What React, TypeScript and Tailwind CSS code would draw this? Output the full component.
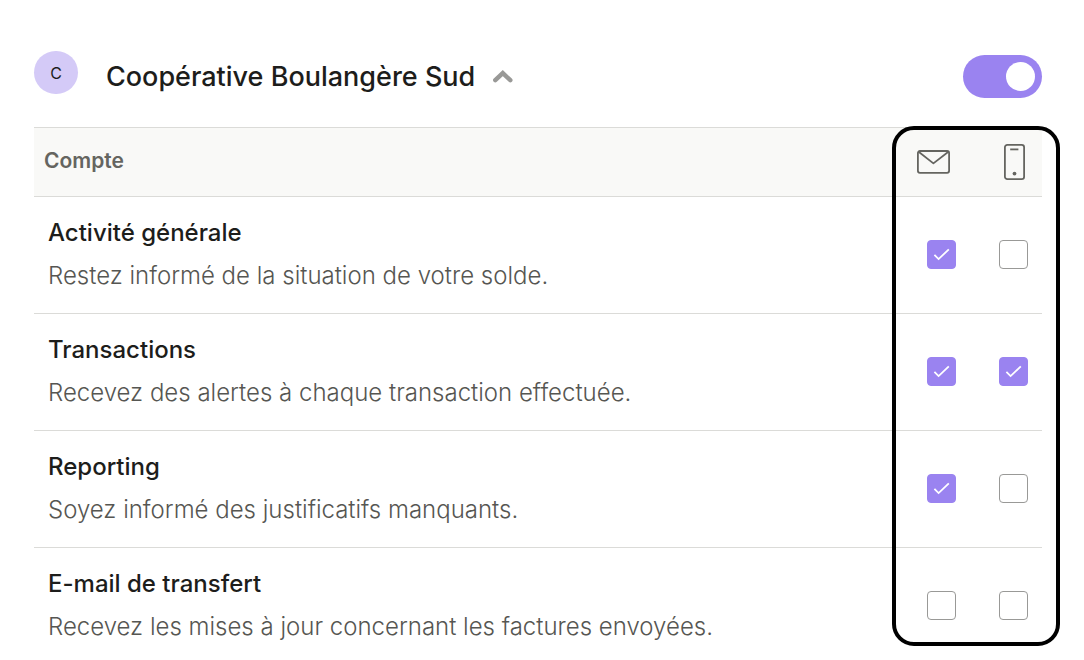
import { useState } from "react";

type Channel = "email" | "push";

interface NotificationSetting {
  id: string;
  title: string;
  description: string;
  email: boolean;
  push: boolean;
}

const INITIAL_SETTINGS: NotificationSetting[] = [
  {
    id: "activity",
    title: "Activité générale",
    description: "Restez informé de la situation de votre solde.",
    email: true,
    push: false,
  },
  {
    id: "transactions",
    title: "Transactions",
    description: "Recevez des alertes à chaque transaction effectuée.",
    email: true,
    push: true,
  },
  {
    id: "reporting",
    title: "Reporting",
    description: "Soyez informé des justificatifs manquants.",
    email: true,
    push: false,
  },
  {
    id: "transfer",
    title: "E-mail de transfert",
    description: "Recevez les mises à jour concernant les factures envoyées.",
    email: false,
    push: false,
  },
];

function ChevronUp() {
  return (
    <svg width="20" height="13" viewBox="0 0 20 13" fill="none" aria-hidden="true">
      <path d="M2.3 10.2 9.8 3.1l7.5 7.1" stroke="#999997" strokeWidth="4.4" strokeLinecap="round" />
    </svg>
  );
}

function MailIcon() {
  return (
    <svg className="block" width="33" height="24" viewBox="0 0 33 24" fill="none" stroke="#656560" strokeWidth="1.8" role="img" aria-label="E-mail">
      <rect x="0.9" y="1" width="31.2" height="21.8" rx="2" />
      <path d="M1.6 1.8 16.4 13.4 31.4 1.8" strokeLinejoin="round" />
    </svg>
  );
}

function PhoneIcon() {
  return (
    <svg className="block" width="21" height="36" viewBox="0 0 21 36" fill="none" stroke="#656560" strokeWidth="1.8" role="img" aria-label="Mobile">
      <rect x="0.9" y="0.9" width="19.2" height="34.2" rx="2.4" />
      <path d="M6.2 5.4h8.2" />
      <circle cx="10.5" cy="29.6" r="1.9" fill="#656560" stroke="none" />
    </svg>
  );
}

interface TickBoxProps {
  label: string;
  checked: boolean;
  onChange: () => void;
}

function TickBox({ label, checked, onChange }: TickBoxProps) {
  return (
    <label className="mx-auto grid size-[29px] cursor-pointer">
      <input
        type="checkbox"
        aria-label={label}
        checked={checked}
        onChange={onChange}
        className="peer col-start-1 row-start-1 size-[29px] cursor-pointer appearance-none rounded border border-[#999997] bg-white checked:border-[#9a83f0] checked:bg-[#9a83f0]"
      />
      <svg
        className="pointer-events-none invisible col-start-1 row-start-1 peer-checked:visible"
        width="29"
        height="29"
        viewBox="0 0 29 29"
        fill="none"
        stroke="#fff"
        strokeWidth="1.8"
        aria-hidden="true"
      >
        <path d="m7.4 14.9 4.2 4.2 10.2-9.8" />
      </svg>
    </label>
  );
}

export default function App() {
  const [enabled, setEnabled] = useState(true);
  const [open, setOpen] = useState(true);
  const [settings, setSettings] = useState(INITIAL_SETTINGS);

  const toggle = (id: string, channel: Channel) =>
    setSettings((rows) => rows.map((r) => (r.id === id ? { ...r, [channel]: !r[channel] } : r)));

  return (
    <main className="min-h-screen bg-white pt-[51px] pr-[42px] pb-4 pl-[34px] font-['Inter',sans-serif] text-[#1d1d1b]">
      <header className="flex min-h-[47px] items-end">
        <span className="flex h-[43px] w-11 items-center justify-center self-start rounded-full bg-[#d4caf7] text-base">
          C
        </span>
        <button
          type="button"
          aria-expanded={open}
          onClick={() => setOpen((o) => !o)}
          className="ml-7 flex h-[43px] cursor-pointer items-center gap-[18px] text-[27px] leading-[43px] font-medium"
        >
          Coopérative Boulangère Sud
          <ChevronUp />
        </button>
        <input
          type="checkbox"
          role="switch"
          aria-label="Notifications Coopérative Boulangère Sud"
          checked={enabled}
          onChange={() => setEnabled((e) => !e)}
          className="ml-auto flex h-[43px] w-[79px] cursor-pointer appearance-none items-center rounded-full bg-[#cccccb] px-[7px] before:size-[29px] before:rounded-full before:bg-white before:content-[''] checked:justify-end checked:bg-[#9a83f0]"
        />
      </header>

      {open && (
        <div className="relative mt-[29px]">
          <table className="w-full border-separate border-spacing-0 text-left">
            <thead>
              <tr className="h-[70px] bg-[#f9f9f7] text-[#656560]">
                <th scope="col" className="border-y border-[#dbdbd8] pb-[2px] pl-[10px] text-[21px] font-semibold">
                  Compte
                </th>
                <th scope="col" className="w-[87px] border-y border-[#dbdbd8] pl-[19px]">
                  <MailIcon />
                </th>
                <th scope="col" className="w-[57px] border-y border-[#dbdbd8] pl-[19px]">
                  <PhoneIcon />
                </th>
              </tr>
            </thead>
            <tbody className="[&>tr:not(:last-child)>*]:border-b [&>tr:not(:last-child)>*]:border-[#dbdbd8] [&>tr:not(:last-child)>*]:pb-[21px]">
              {settings.map((row) => (
                <tr key={row.id}>
                  <th scope="row" className="pt-5 pl-[14px] align-top text-2xl leading-8">
                    <div className="font-medium">{row.title}</div>
                    <div className="mt-[11px] font-light text-[#565652]">{row.description}</div>
                  </th>
                  <td className="pt-[43px] align-top">
                    <TickBox
                      label={`${row.title} par e-mail`}
                      checked={row.email}
                      onChange={() => toggle(row.id, "email")}
                    />
                  </td>
                  <td className="pt-[43px] align-top">
                    <TickBox
                      label={`${row.title} sur mobile`}
                      checked={row.push}
                      onChange={() => toggle(row.id, "push")}
                    />
                  </td>
                </tr>
              ))}
            </tbody>
          </table>

          {/* frame around the two channel columns */}
          <div className="pointer-events-none absolute -top-px -right-[18px] -bottom-[3px] w-[168px] rounded-[22px] border-4 border-black" />
        </div>
      )}
    </main>
  );
}
